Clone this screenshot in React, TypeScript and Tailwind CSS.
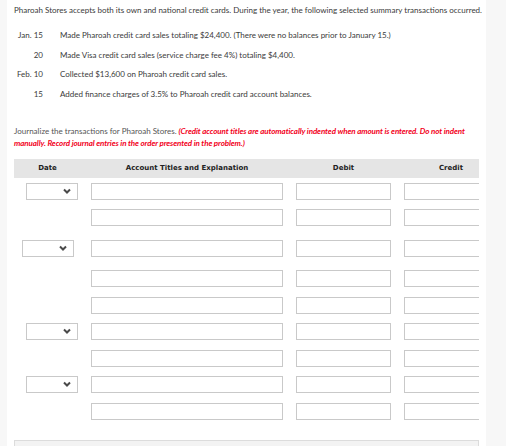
import type { ReactNode } from 'react';

const lato = "font-['Lato','Liberation_Sans',sans-serif]";

const transactions = [
  { date: 'Jan. 15', text: 'Made Pharoah credit card sales totaling $24,400. (There were no balances prior to January 15.)' },
  { date: '20', text: 'Made Visa credit card sales (service charge fee 4%) totaling $4,400.' },
  { date: 'Feb. 10', text: 'Collected $13,600 on Pharoah credit card sales.' },
  { date: '15', text: 'Added finance charges of 3.5% to Pharoah credit card account balances.' },
];

const rows = [
  { select: 'ml-[12px]', gap: 'mt-[5px]' },
  { select: '', gap: 'mt-[9px]' },
  { select: 'ml-[8px] mr-[4px]', gap: 'mt-[14px]' },
  { select: '', gap: 'mt-[13px]' },
  { select: '', gap: 'mt-[10px]' },
  { select: 'ml-[12px]', gap: 'mt-[9px]' },
  { select: '', gap: 'mt-[10px]' },
  { select: 'ml-[12px]', gap: 'mt-[9px]' },
  { select: '', gap: 'mt-[10px]' },
];

function Box({ className = '', children }: { className?: string; children?: ReactNode }) {
  return <div className={`h-[17px] shrink-0 border border-[#c9c9c9] bg-white ${className}`}>{children}</div>;
}

function DateSelect({ className = '' }: { className?: string }) {
  return (
    <Box className={`flex w-[52px] items-center justify-end pr-[6px] ${className}`}>
      <svg width="8" height="6" viewBox="0 0 8 6">
        <polyline points="1,1.5 4,4.5 7,1.5" fill="none" stroke="#4a4a4a" strokeWidth="2" />
      </svg>
    </Box>
  );
}

export default function App() {
  return (
    <div className={`min-h-screen w-[506px] bg-[#f7f7f7] ${lato}`}>
      <div className="ml-[7px] h-[446px] w-[479px] overflow-hidden bg-white pl-[7px] pt-[5px]">
        <p className="text-[8px] leading-[10px] text-[#3a3a3a]">
          Pharoah Stores accepts both its own and national credit cards. During the year, the following selected summary transactions occurred.
        </p>

        <div className="mt-[15px] flex flex-col gap-[9.5px] text-[8px] leading-[10px] text-[#3a3a3a]">
          {transactions.map((t) => (
            <div key={t.text} className="flex">
              <span className="w-[29px] text-right">{t.date}</span>
              <span className="ml-[17px]">{t.text}</span>
            </div>
          ))}
        </div>

        <p className="mt-[26px] w-[466px] text-[8px] leading-[12px] text-[#555]">
          Journalize the transactions for Pharoah Stores.{' '}
          <span className="font-bold italic tracking-[-0.1px] text-[#f2001b]">
            (Credit account titles are automatically indented when amount is entered. Do not indent manually. Record journal entries in the order presented in the problem.)
          </span>
        </p>

        <div className="mt-[10px] w-[465px] overflow-hidden">
          <div className="flex h-[19px] items-center bg-[#e5e5e5] font-['DejaVu_Sans',sans-serif] text-[7px] font-bold text-[#222]">
            <div className="w-[67px] shrink-0 text-center">Date</div>
            <div className="w-[212px] shrink-0 text-center">Account Titles and Explanation</div>
            <div className="w-[101px] shrink-0 text-center">Debit</div>
            <div className="w-[114px] shrink-0 text-center">Credit</div>
          </div>

          {rows.map((r, i) => (
            <div key={i} className={`flex ${r.gap}`}>
              {r.select ? <DateSelect className={r.select} /> : <div className="ml-[12px] w-[52px] shrink-0" />}
              <Box className="ml-[13px] w-[192px]" />
              <Box className="ml-[13px] w-[95px]" />
              <Box className="ml-[13px] w-[95px]" />
            </div>
          ))}

          <div className="mt-[20px] h-[20px] border border-[#dcdcdc] bg-[#f3f3f3]" />
        </div>
      </div>
    </div>
  );
}
